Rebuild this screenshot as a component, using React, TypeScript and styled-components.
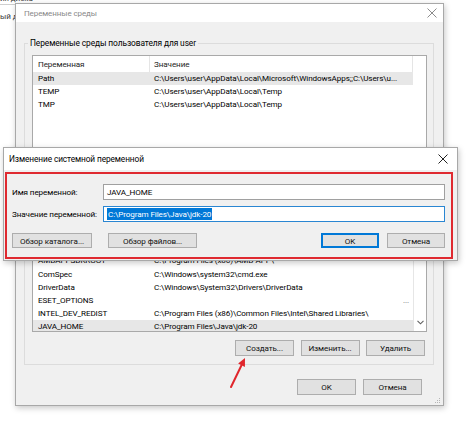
import React from 'react';
import styled, { createGlobalStyle } from 'styled-components';

const GlobalStyle = createGlobalStyle`
  html, body {
    margin: 0;
    padding: 0;
    background: #ffffff;
  }
  body {
    font-family: Roboto, 'Noto Sans', 'Liberation Sans', sans-serif;
    font-size: 8.1px;
    letter-spacing: -0.1px;
    color: #000;
  }
`;

const Desktop = styled.div`
  position: relative;
  width: 474px;
  height: 435px;
  overflow: hidden;
  background: #ffffff;
`;

const BackWindow = styled.div`
  position: absolute;
  left: 0;
  top: -7px;
  width: 100px;
  height: 40px;
  display: flex;
  flex-direction: column;
  gap: 6px;
  color: #3a3a3a;
  line-height: 11px;
`;

const BackLine = styled.div<{ $underline?: boolean }>`
  white-space: nowrap;
  border-bottom: ${p => (p.$underline ? '1px solid #cfcfcf' : 'none')};
`;

const Window = styled.div<{ $left: number; $top: number; $width: number; $height: number }>`
  position: absolute;
  left: ${p => p.$left}px;
  top: ${p => p.$top}px;
  width: ${p => p.$width}px;
  height: ${p => p.$height}px;
  box-sizing: border-box;
  background: #f0f0f0;
  border: 1px solid #a8a8a8;
  box-shadow: 1px 2px 6px rgba(0, 0, 0, 0.22);
  display: flex;
  flex-direction: column;
`;

const TitleBar = styled.div<{ $height: number; $pad: number }>`
  height: ${p => p.$height}px;
  flex: none;
  background: #ffffff;
  display: flex;
  align-items: center;
  padding-left: ${p => p.$pad}px;
  position: relative;
`;

const TitleText = styled.span<{ $active?: boolean }>`
  color: ${p => (p.$active ? '#000' : '#8a8a8a')};
  font-size: ${p => (p.$active ? 8.3 : 8)}px;
`;

const CloseButton = styled.div<{ $right: number }>`
  position: absolute;
  right: ${p => p.$right}px;
  top: 50%;
  transform: translateY(-50%);
  width: 10px;
  height: 10px;
`;

const MainBody = styled.div`
  flex: 1;
  display: flex;
  flex-direction: column;
  padding: 0 9px 0 8px;
`;

const GroupBox = styled.div<{ $mt: number }>`
  position: relative;
  margin-top: ${p => p.$mt}px;
  border: 1px solid #dcdcdc;
  padding: 11px 6px 8px 7px;
  display: flex;
  flex-direction: column;
`;

const GroupTitle = styled.span`
  position: absolute;
  left: 3px;
  top: -7px;
  padding: 0 2px;
  line-height: 13px;
  background: #f0f0f0;
  font-size: 8.4px;
`;

const ListView = styled.div<{ $height: number }>`
  height: ${p => p.$height}px;
  box-sizing: border-box;
  border: 1px solid #a9a9a9;
  background: #ffffff;
  display: flex;
  overflow: hidden;
`;

const ListContent = styled.div`
  width: 380px;
  flex: none;
  display: flex;
  flex-direction: column;
`;

const ListHeader = styled.div`
  height: 16px;
  flex: none;
  display: grid;
  grid-template-columns: 117px 263px;
`;

const HeaderCell = styled.div<{ $pad: number }>`
  display: flex;
  align-items: center;
  padding-left: ${p => p.$pad}px;
  border-right: 1px solid #e5e5e5;
  color: #1e1e1e;
`;

const ListRow = styled.div<{ $selected?: boolean }>`
  height: 13.2px;
  flex: none;
  display: grid;
  grid-template-columns: 117px 263px;
  align-items: center;
  background: ${p => (p.$selected ? '#e7e7e7' : 'transparent')};
`;

const Cell = styled.div<{ $pad: number; $end?: boolean }>`
  padding-left: ${p => p.$pad}px;
  padding-right: ${p => (p.$end ? 4 : 0)}px;
  white-space: nowrap;
  overflow: hidden;
  text-align: ${p => (p.$end ? 'right' : 'left')};
  line-height: 13px;
  color: ${p => (p.$end ? '#777' : 'inherit')};
`;

const ScrollBar = styled.div`
  flex: 1;
  border-left: 1px solid #e6e6e6;
  display: flex;
  flex-direction: column;
  justify-content: flex-end;
  align-items: center;
  padding-bottom: 6px;
`;

const ButtonRow = styled.div<{ $mt: number; $gap: number; $pr?: number }>`
  display: flex;
  justify-content: flex-end;
  gap: ${p => p.$gap}px;
  margin-top: ${p => p.$mt}px;
  padding-right: ${p => p.$pr ?? 0}px;
`;

const Button = styled.div<{ $width: number; $height: number; $default?: boolean; $ml?: number }>`
  width: ${p => p.$width}px;
  height: ${p => p.$height}px;
  margin-left: ${p => p.$ml ?? 0}px;
  box-sizing: border-box;
  background: #e1e1e1;
  border: 1px solid ${p => (p.$default ? '#0078d7' : '#adadad')};
  box-shadow: ${p => (p.$default ? 'inset 0 0 0 1px #0078d7' : 'none')};
  display: flex;
  align-items: center;
  justify-content: center;
  white-space: nowrap;
  color: #111;
`;

const Grip = styled.div`
  position: absolute;
  right: 2px;
  bottom: 2px;
  width: 7px;
  height: 7px;
`;

const DialogBody = styled.div`
  flex: 1;
  padding: 14px 12px 0 8px;
  display: flex;
  flex-direction: column;
`;

const FormGrid = styled.div`
  display: grid;
  grid-template-columns: 91px 1fr;
  row-gap: 6px;
  align-items: center;
`;

const FieldLabel = styled.span`
  white-space: nowrap;
`;

const TextField = styled.div<{ $focused?: boolean }>`
  height: 16px;
  box-sizing: border-box;
  border: 1px solid ${p => (p.$focused ? '#2a86d2' : '#a0a0a0')};
  background: #fff;
  display: flex;
  align-items: center;
  padding-left: 3px;
  white-space: nowrap;
`;

const Selection = styled.span`
  background: #0078d7;
  color: #fff;
  line-height: 12px;
  padding: 0 1px;
`;

const DialogButtons = styled.div`
  display: flex;
  align-items: center;
  margin-top: 11px;
  gap: 8px;
`;

const Spacer = styled.div`
  flex: 1;
`;

const Annotation = styled.div`
  position: absolute;
  left: 1px;
  top: 24px;
  width: 448px;
  height: 87px;
  box-sizing: border-box;
  border: 2px solid #df2a30;
  pointer-events: none;
`;

const Arrow = styled.svg`
  position: absolute;
  left: 226px;
  top: 354px;
`;

const CloseIcon = ({ color }: { color: string }) => (
  <svg width="10" height="10" viewBox="0 0 10 10">
    <path d="M0.5 0.5 L9.5 9.5 M9.5 0.5 L0.5 9.5" stroke={color} strokeWidth="1" fill="none" />
  </svg>
);

interface EnvVar {
  name: string;
  value: string;
  selected?: boolean;
  end?: boolean;
}

const userVars: EnvVar[] = [
  { name: 'Path', value: 'C:\\Users\\user\\AppData\\Local\\Microsoft\\WindowsApps;;C:\\Users\\u...', selected: true },
  { name: 'TEMP', value: 'C:\\Users\\user\\AppData\\Local\\Temp' },
  { name: 'TMP', value: 'C:\\Users\\user\\AppData\\Local\\Temp' },
];

const systemVars: EnvVar[] = [
  { name: 'ACSetupSvcPort', value: '23210' },
  { name: 'ACSvcPort', value: '17532' },
  { name: 'AMDAPPSDKROOT', value: 'C:\\Program Files (x86)\\AMD APP\\' },
  { name: 'ComSpec', value: 'C:\\Windows\\system32\\cmd.exe' },
  { name: 'DriverData', value: 'C:\\Windows\\System32\\Drivers\\DriverData' },
  { name: 'ESET_OPTIONS', value: '...', end: true },
  { name: 'INTEL_DEV_REDIST', value: 'C:\\Program Files (x86)\\Common Files\\Intel\\Shared Libraries\\' },
  { name: 'JAVA_HOME', value: 'C:\\Program Files\\Java\\jdk-20', selected: true },
];

function VarList({ rows, height, scroll }: { rows: EnvVar[]; height: number; scroll?: boolean }) {
  return (
    <ListView $height={height}>
      <ListContent>
        <ListHeader>
          <HeaderCell $pad={5}>Переменная</HeaderCell>
          <HeaderCell $pad={4}>Значение</HeaderCell>
        </ListHeader>
        {rows.map(row => (
          <ListRow key={row.name} $selected={row.selected}>
            <Cell $pad={5}>{row.name}</Cell>
            <Cell $pad={4} $end={row.end}>{row.value}</Cell>
          </ListRow>
        ))}
      </ListContent>
      {scroll && (
        <ScrollBar>
          <svg width="7" height="5" viewBox="0 0 7 5">
            <path d="M0.5 0.8 L3.5 3.8 L6.5 0.8" stroke="#606060" strokeWidth="1.1" fill="none" />
          </svg>
        </ScrollBar>
      )}
    </ListView>
  );
}

function ListButtons() {
  return (
    <ButtonRow $mt={8} $gap={6.5} $pr={2}>
      <Button $width={59} $height={16}>Создать...</Button>
      <Button $width={59} $height={16}>Изменить...</Button>
      <Button $width={59} $height={16}>Удалить</Button>
    </ButtonRow>
  );
}

export default function App() {
  return (
    <Desktop>
      <GlobalStyle />
      <BackWindow>
        <BackLine $underline>ия диска</BackLine>
        <BackLine>ый дамп</BackLine>
      </BackWindow>

      <Window $left={15} $top={3} $width={429} $height={403}>
        <TitleBar $height={18} $pad={8}>
          <TitleText>Переменные среды</TitleText>
          <CloseButton $right={6}>
            <CloseIcon color="#8c8c8c" />
          </CloseButton>
        </TitleBar>
        <MainBody>
          <GroupBox $mt={21}>
            <GroupTitle>Переменные среды пользователя для user</GroupTitle>
            <VarList rows={userVars} height={96} />
            <ListButtons />
          </GroupBox>
          <GroupBox $mt={15}>
            <GroupTitle>Системные переменные</GroupTitle>
            <VarList rows={systemVars} height={121} scroll />
            <ListButtons />
          </GroupBox>
          <ButtonRow $mt={14} $gap={7} $pr={12}>
            <Button $width={59} $height={16}>OK</Button>
            <Button $width={59} $height={16}>Отмена</Button>
          </ButtonRow>
        </MainBody>
        <Grip>
          <svg width="7" height="7" viewBox="0 0 7 7">
            <g fill="#b5b5b5">
              <rect x="5" y="1" width="1" height="1" />
              <rect x="3" y="3" width="1" height="1" />
              <rect x="5" y="3" width="1" height="1" />
              <rect x="1" y="5" width="1" height="1" />
              <rect x="3" y="5" width="1" height="1" />
              <rect x="5" y="5" width="1" height="1" />
            </g>
          </svg>
        </Grip>
      </Window>

      <Window $left={3} $top={147} $width={455} $height={114}>
        <TitleBar $height={22} $pad={5}>
          <TitleText $active>Изменение системной переменной</TitleText>
          <CloseButton $right={9}>
            <CloseIcon color="#222" />
          </CloseButton>
        </TitleBar>
        <DialogBody>
          <FormGrid>
            <FieldLabel>Имя переменной:</FieldLabel>
            <TextField>JAVA_HOME</TextField>
            <FieldLabel>Значение переменной:</FieldLabel>
            <TextField $focused>
              <Selection>C:\Program Files\Java\jdk-20</Selection>
            </TextField>
          </FormGrid>
          <DialogButtons>
            <Button $width={80} $height={15}>Обзор каталога...</Button>
            <Button $width={89} $height={15} $ml={8}>Обзор файлов...</Button>
            <Spacer />
            <Button $width={58} $height={15} $default>OK</Button>
            <Button $width={58} $height={15}>Отмена</Button>
          </DialogButtons>
        </DialogBody>
        <Annotation />
      </Window>

      <Arrow width="24" height="38" viewBox="0 0 24 38">
        <path d="M5 33 L15.5 11.2" stroke="#e0262c" strokeWidth="2" strokeLinecap="round" fill="none" />
        <polygon points="19,4 18.9,12.9 12.1,9.6" fill="#e0262c" />
      </Arrow>
    </Desktop>
  );
}
